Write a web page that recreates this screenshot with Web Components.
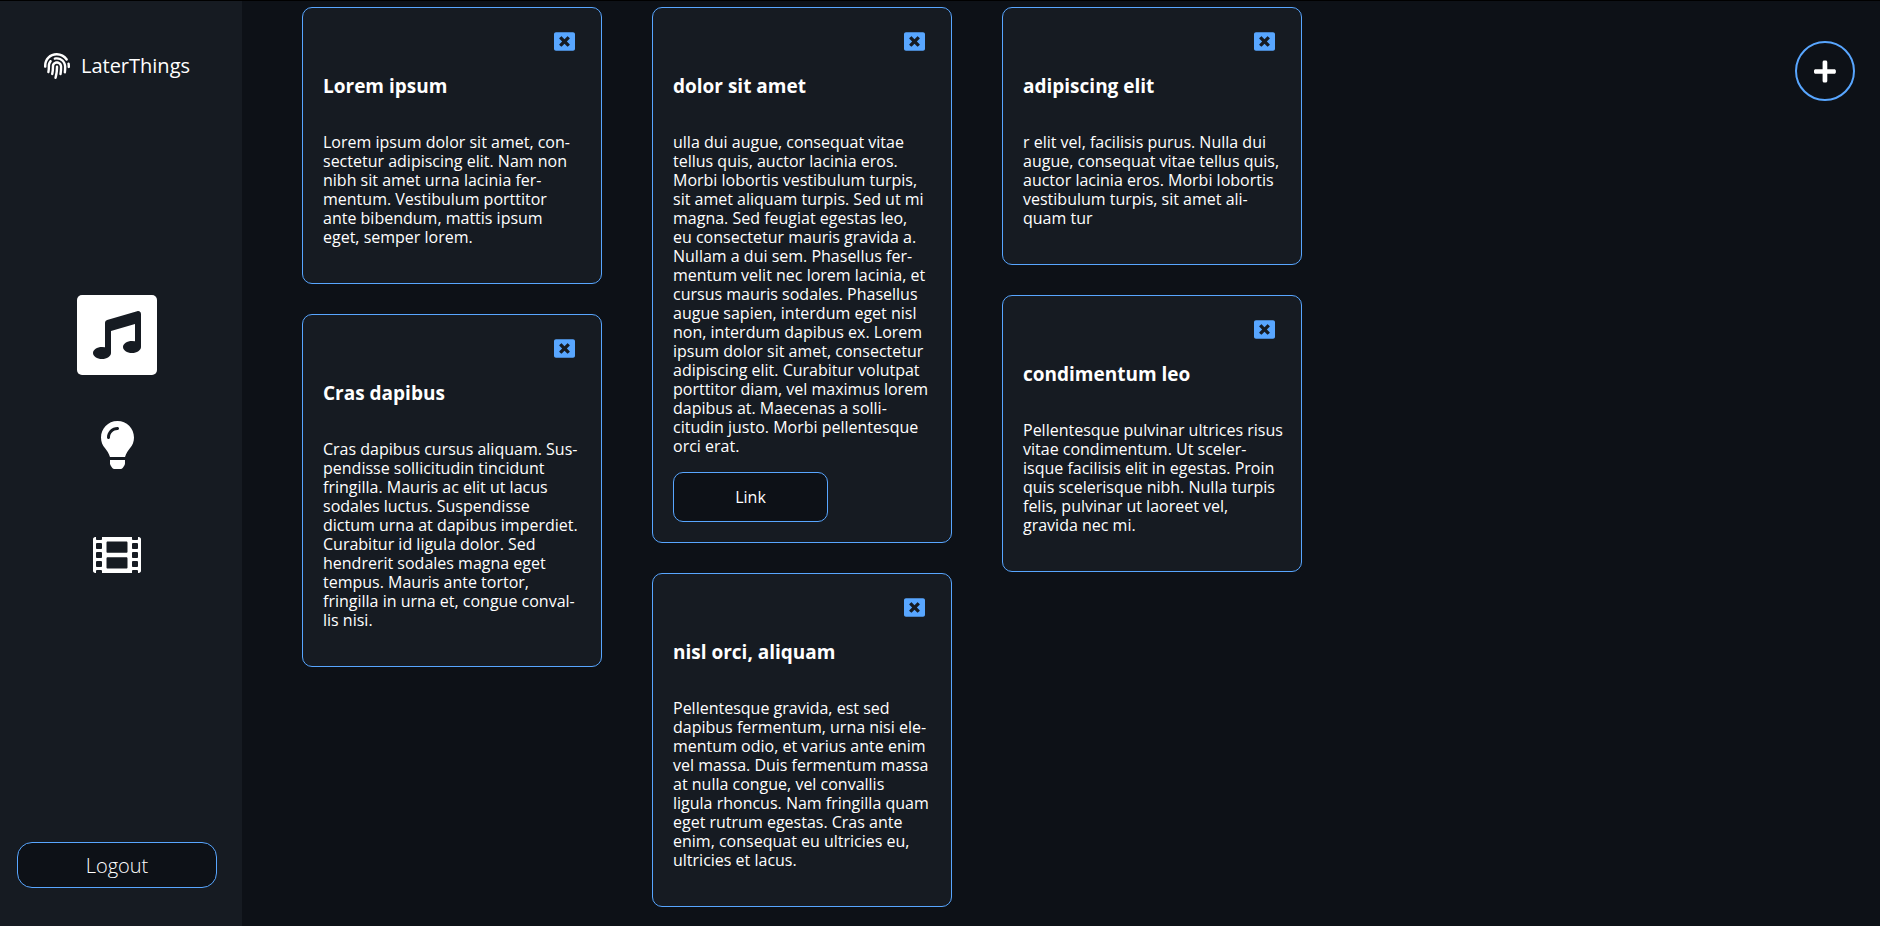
<!DOCTYPE html>
<html lang="en">
<head>
<meta charset="utf-8">
<title>LaterThings</title>
<style>
  body {
    margin: 0;
    background: #0d1117;
    color: #fff;
    font: 16px/19px "Open Sans", "Noto Sans", sans-serif;
  }
</style>
</head>
<body>
<later-app>
  <side-bar slot="side">
    <nav-item label="Music" icon="music" active></nav-item>
    <nav-item label="Ideas" icon="bulb"></nav-item>
    <nav-item label="Films" icon="film"></nav-item>
  </side-bar>

  <card-column>
    <note-card heading="Lorem ipsum">Lorem ipsum dolor sit amet, con-
sectetur adipiscing elit. Nam non
nibh sit amet urna lacinia fer-
mentum. Vestibulum porttitor
ante bibendum, mattis ipsum
eget, semper lorem.</note-card>
    <note-card heading="Cras dapibus">Cras dapibus cursus aliquam. Sus-
pendisse sollicitudin tincidunt
fringilla. Mauris ac elit ut lacus
sodales luctus. Suspendisse
dictum urna at dapibus imperdiet.
Curabitur id ligula dolor. Sed
hendrerit sodales magna eget
tempus. Mauris ante tortor,
fringilla in urna et, congue conval-
lis nisi.</note-card>
  </card-column>

  <card-column>
    <note-card heading="dolor sit amet" link="#link">ulla dui augue, consequat vitae
tellus quis, auctor lacinia eros.
Morbi lobortis vestibulum turpis,
sit amet aliquam turpis. Sed ut mi
magna. Sed feugiat egestas leo,
eu consectetur mauris gravida a.
Nullam a dui sem. Phasellus fer-
mentum velit nec lorem lacinia, et
cursus mauris sodales. Phasellus
augue sapien, interdum eget nisl
non, interdum dapibus ex. Lorem
ipsum dolor sit amet, consectetur
adipiscing elit. Curabitur volutpat
porttitor diam, vel maximus lorem
dapibus at. Maecenas a solli-
citudin justo. Morbi pellentesque
orci erat.</note-card>
    <note-card heading="nisl orci, aliquam">Pellentesque gravida, est sed
dapibus fermentum, urna nisi ele-
mentum odio, et varius ante enim
vel massa. Duis fermentum massa
at nulla congue, vel convallis
ligula rhoncus. Nam fringilla quam
eget rutrum egestas. Cras ante
enim, consequat eu ultricies eu,
ultricies et lacus.</note-card>
  </card-column>

  <card-column>
    <note-card heading="adipiscing elit">r elit vel, facilisis purus. Nulla dui
augue, consequat vitae tellus quis,
auctor lacinia eros. Morbi lobortis
vestibulum turpis, sit amet ali-
quam tur</note-card>
    <note-card heading="condimentum leo">Pellentesque pulvinar ultrices risus
vitae condimentum. Ut sceler-
isque facilisis elit in egestas. Proin
quis scelerisque nibh. Nulla turpis
felis, pulvinar ut laoreet vel,
gravida nec mi.</note-card>
  </card-column>

  <add-button slot="action"></add-button>
</later-app>

<script>
const ICONS = {
  music: ['0 0 512 512', 'M470.38 1.51L150.41 96A32 32 0 0 0 128 126.51v261.41A139 139 0 0 0 96 384c-53 0-96 28.66-96 64s43 64 96 64 96-28.66 96-64V214.32l256-75v184.61a138.4 138.4 0 0 0-32-3.93c-53 0-96 28.66-96 64s43 64 96 64 96-28.65 96-64V32a32 32 0 0 0-41.62-30.49z'],
  bulb: ['0 0 352 512', 'M96.06 454.35c.01 6.29 1.87 12.45 5.36 17.69l17.09 25.69a31.99 31.99 0 0 0 26.64 14.28h61.71a31.99 31.99 0 0 0 26.64-14.28l17.09-25.69a31.989 31.989 0 0 0 5.36-17.69l.04-38.35H96.01l.05 38.35zM0 176c0 44.37 16.45 84.85 43.56 115.78 16.52 18.85 42.36 58.23 52.21 91.45.04.26.07.52.11.78h160.24c.04-.26.07-.51.11-.78 9.85-33.22 35.69-72.6 52.21-91.45C335.55 260.85 352 220.37 352 176 352 78.61 272.91-.3 175.45 0 73.44.31 0 82.97 0 176zm176-80c-44.11 0-80 35.89-80 80 0 8.84-7.16 16-16 16s-16-7.16-16-16c0-61.76 50.24-112 112-112 8.84 0 16 7.16 16 16s-7.16 16-16 16z'],
  film: ['0 0 512 512', 'M488 64h-8v20c0 6.6-5.4 12-12 12h-40c-6.6 0-12-5.4-12-12V64H96v20c0 6.6-5.4 12-12 12H44c-6.6 0-12-5.4-12-12V64h-8C10.7 64 0 74.7 0 88v336c0 13.3 10.7 24 24 24h8v-20c0-6.6 5.4-12 12-12h40c6.6 0 12 5.4 12 12v20h320v-20c0-6.6 5.4-12 12-12h40c6.6 0 12 5.4 12 12v20h8c13.3 0 24-10.7 24-24V88c0-13.3-10.7-24-24-24zM96 372c0 6.6-5.4 12-12 12H44c-6.6 0-12-5.4-12-12v-40c0-6.6 5.4-12 12-12h40c6.6 0 12 5.4 12 12v40zm0-96c0 6.6-5.4 12-12 12H44c-6.6 0-12-5.4-12-12v-40c0-6.6 5.4-12 12-12h40c6.6 0 12 5.4 12 12v40zm0-96c0 6.6-5.4 12-12 12H44c-6.6 0-12-5.4-12-12v-40c0-6.6 5.4-12 12-12h40c6.6 0 12 5.4 12 12v40zm272 208c0 6.6-5.4 12-12 12H156c-6.6 0-12-5.4-12-12v-96c0-6.6 5.4-12 12-12h200c6.6 0 12 5.4 12 12v96zm0-168c0 6.6-5.4 12-12 12H156c-6.6 0-12-5.4-12-12v-96c0-6.6 5.4-12 12-12h200c6.6 0 12 5.4 12 12v96zm112 152c0 6.6-5.4 12-12 12h-40c-6.6 0-12-5.4-12-12v-40c0-6.6 5.4-12 12-12h40c6.6 0 12 5.4 12 12v40zm0-96c0 6.6-5.4 12-12 12h-40c-6.6 0-12-5.4-12-12v-40c0-6.6 5.4-12 12-12h40c6.6 0 12 5.4 12 12v40zm0-96c0 6.6-5.4 12-12 12h-40c-6.6 0-12-5.4-12-12v-40c0-6.6 5.4-12 12-12h40c6.6 0 12 5.4 12 12v40z'],
  close: ['0 0 512 512', 'M464 32H48C21.5 32 0 53.5 0 80v352c0 26.5 21.5 48 48 48h416c26.5 0 48-21.5 48-48V80c0-26.5-21.5-48-48-48zm-83.6 290.5c4.8 4.8 4.8 12.6 0 17.4l-40.5 40.5c-4.8 4.8-12.6 4.8-17.4 0L256 313.3l-66.5 67.1c-4.8 4.8-12.6 4.8-17.4 0l-40.5-40.5c-4.8-4.8-4.8-12.6 0-17.4l67.1-66.5-67.1-66.5c-4.8-4.8-4.8-12.6 0-17.4l40.5-40.5c4.8-4.8 12.6-4.8 17.4 0l66.5 67.1 66.5-67.1c4.8-4.8 12.6-4.8 17.4 0l40.5 40.5c4.8 4.8 4.8 12.6 0 17.4L313.3 256l67.1 66.5z'],
  plus: ['0 0 448 512', 'M416 208H272V64c0-17.67-14.33-32-32-32h-32c-17.67 0-32 14.33-32 32v144H32c-17.67 0-32 14.33-32 32v32c0 17.67 14.33 32 32 32h144v144c0 17.67 14.33 32 32 32h32c17.67 0 32-14.33 32-32V304h144c17.67 0 32-14.33 32-32v-32c0-17.67-14.33-32-32-32z'],
  fingerprint: ['0 0 512 512', 'M256.12 245.96c-13.25 0-24 10.74-24 24 1.14 72.25-8.14 141.9-27.7 211.55-2.73 9.72 2.15 30.49 23.12 30.49 10.48 0 20.11-6.92 23.09-17.52 13.53-47.91 31.04-125.41 29.48-224.52.01-13.25-10.73-24-23.99-24zm-.86-81.73C194 164.16 151.25 211.3 152.1 265.32c.75 47.94-3.75 95.91-13.37 142.55-2.69 12.98 5.67 25.69 18.64 28.36 13.05 2.67 25.67-5.66 28.36-18.64 10.34-50.09 15.17-101.58 14.37-153.02-.41-25.95 19.92-52.49 54.45-52.34 31.31.47 57.15 25.34 57.62 55.47.77 48.05-2.81 96.33-10.61 143.55-2.17 13.06 6.69 25.42 19.76 27.58 19.97 3.33 26.81-15.1 27.58-19.77 8.28-50.03 12.06-101.21 11.27-152.11-.88-55.8-47.94-101.88-104.91-102.72zm-110.69-19.78c-10.3-8.34-25.37-6.8-33.76 3.48-25.62 31.5-39.39 71.28-38.75 112 .59 37.58-2.47 75.27-9.11 112.05-2.34 13.05 6.31 25.53 19.36 27.89 20.11 3.5 27.07-14.81 27.89-19.36 7.19-39.84 10.5-80.66 9.86-121.33-.47-29.88 9.2-57.88 28-80.97 8.35-10.28 6.79-25.39-3.49-33.76zm109.47-62.33c-15.41-.41-30.87 1.44-45.78 4.97-12.89 3.06-20.87 15.98-17.83 28.89 3.06 12.89 16 20.83 28.89 17.83 11.05-2.61 22.47-3.77 34-3.69 75.43 1.13 137.73 61.5 138.88 134.58.59 37.88-1.28 76.11-5.58 113.63-1.5 13.17 7.95 25.08 21.11 26.58 16.72 1.95 25.51-11.88 26.58-21.11a929.06 929.06 0 0 0 5.89-119.85c-1.56-98.75-85.07-180.33-186.16-181.83zm252.07 121.45c-2.86-12.92-15.51-21.2-28.61-18.27-12.94 2.86-21.12 15.66-18.26 28.61 4.71 21.41 4.91 37.41 4.7 61.6-.11 13.27 10.55 24.09 23.8 24.2h.2c13.17 0 23.89-10.61 24-23.8.18-22.18.4-44.11-5.83-72.34zm-40.12-90.72C417.29 43.46 337.6 1.29 252.81.02 183.02-.82 118.47 24.91 70.46 72.94 24.09 119.37-.9 181.04.14 246.65l-.12 21.47c-.39 13.25 10.03 24.31 23.28 24.69.23.02.48.02.72.02 12.92 0 23.59-10.3 23.97-23.3l.16-23.64c-.83-52.5 19.16-101.86 56.28-139 38.76-38.8 91.34-59.67 147.68-58.86 69.45 1.03 134.73 35.56 174.62 92.39 7.61 10.86 22.56 13.45 33.42 5.86 10.84-7.62 13.46-22.59 5.84-33.43z']
};
const icon = name => `<svg viewBox="${ICONS[name][0]}" aria-hidden="true"><path fill="currentColor" d="${ICONS[name][1]}"/></svg>`;

class Base extends HTMLElement {
  connectedCallback() {
    if (this.shadowRoot) return;
    this.attachShadow({ mode: 'open' }).innerHTML =
      `<style>*{box-sizing:border-box} :host{box-sizing:border-box} svg{display:block} ${this.css()}</style>${this.html()}`;
  }
}

customElements.define('later-app', class extends Base {
  css() { return `
    :host { display: flex; min-height: 100vh; border-top: 1px solid #000; }
    main { flex: 1; display: flex; align-items: flex-start; gap: 50px; padding: 6px 25px 16px 60px; }
    .action { margin-left: auto; padding-top: 34px; }`; }
  html() { return `<slot name="side"></slot><main><slot></slot><div class="action"><slot name="action"></slot></div></main>`; }
});

customElements.define('side-bar', class extends Base {
  css() { return `
    :host { flex: none; width: 242px; display: flex; flex-direction: column; justify-content: space-between;
            padding: 51px 25px 38px 17px; background: #161b22; }
    header { display: flex; justify-content: center; align-items: center; gap: 11px; font-size: 20px; line-height: 27px; }
    header svg { width: 26px; height: 26px; }
    nav { display: flex; flex-direction: column; align-items: center; gap: 30px; margin-bottom: 32px; }
    button { width: 100%; height: 46px; border: 1px solid #58a6ff; border-radius: 15px; background: #0d1117;
             color: inherit; font: 300 20px/27px "Open Sans", sans-serif; }`; }
  html() { return `<header>${icon('fingerprint')}<span>LaterThings</span></header>
    <nav><slot></slot></nav><button type="button">Logout</button>`; }
});

customElements.define('nav-item', class extends Base {
  css() { return `
    :host { display: block; }
    button { display: flex; align-items: center; justify-content: center; width: 80px; height: 80px; padding: 0;
             border: 0; border-radius: 5px; background: none; color: #fff; }
    :host([active]) button { background: #fff; color: #161b22; }
    svg { height: 48px; }`; }
  html() { return `<button type="button" aria-label="${this.getAttribute('label')}">${icon(this.getAttribute('icon'))}</button>`; }
});

customElements.define('card-column', class extends Base {
  css() { return `:host { display: flex; flex-direction: column; gap: 30px; flex: 0 0 300px; min-width: 0; }`; }
  html() { return `<slot></slot>`; }
});

customElements.define('note-card', class extends Base {
  css() { return `
    :host { display: block; padding: 20px; border: 1px solid #58a6ff; border-radius: 10px; background: #161b22; }
    .close { display: block; margin: 3px 6px 0 auto; padding: 0; border: 0; background: none; color: #58a6ff; }
    .close svg { width: 21px; height: 21px; }
    h3 { margin: 20px 0 33px; font-size: 19px; line-height: 28px; }
    p { margin: 0 0 16px; white-space: pre; }
    a { display: flex; align-items: center; justify-content: center; width: 155px; height: 50px;
        border: 1px solid #58a6ff; border-radius: 10px; background: #0d1117; color: inherit; text-decoration: none; }`; }
  html() {
    const link = this.getAttribute('link');
    return `<button class="close" type="button" aria-label="Delete">${icon('close')}</button>
      <h3>${this.getAttribute('heading')}</h3><p><slot></slot></p>${link ? `<a href="${link}">Link</a>` : ''}`;
  }
});

customElements.define('add-button', class extends Base {
  css() { return `
    :host { display: block; }
    button { display: flex; align-items: center; justify-content: center; width: 60px; height: 60px; padding: 0;
             border: 2px solid #58a6ff; border-radius: 50%; background: none; color: #fff; }
    svg { height: 25px; }`; }
  html() { return `<button type="button" aria-label="Add">${icon('plus')}</button>`; }
});
</script>
</body>
</html>
